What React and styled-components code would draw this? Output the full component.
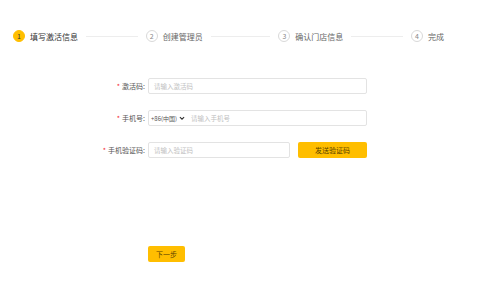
import React from 'react'
import styled, { createGlobalStyle } from 'styled-components'

const GlobalStyle = createGlobalStyle`
  html, body {
    margin: 0;
    padding: 0;
    background: #fff;
    font-family: "Noto Sans CJK SC", "Noto Sans", sans-serif;
  }
`

const Page = styled.div`
  width: 500px;
  height: 300px;
  box-sizing: border-box;
  padding: 30px 0 0 13px;
`

const StepsBar = styled.div`
  display: flex;
  align-items: center;
  width: 431px;
`

const Step = styled.div`
  display: flex;
  align-items: center;
  flex: ${props => (props.last ? 'none' : '1')};
`

const StepIcon = styled.span`
  width: 12px;
  height: 12px;
  box-sizing: border-box;
  border-radius: 50%;
  display: flex;
  align-items: center;
  justify-content: center;
  font-size: 7px;
  line-height: 1;
  background: ${props => (props.active ? '#ffbf00' : '#fff')};
  border: 1px solid ${props => (props.active ? '#ffbf00' : '#d9d9d9')};
  color: ${props => (props.active ? '#333' : '#888')};
`

const StepTitle = styled.span`
  margin-left: 5px;
  font-size: 8px;
  color: ${props => (props.active ? '#333' : '#666')};
  white-space: nowrap;
`

const StepLine = styled.span`
  flex: 1;
  height: 1px;
  background: #ededed;
  margin: 0 8px;
`

const Form = styled.div`
  margin-top: 36px;
  display: flex;
  flex-direction: column;
  gap: 16px;
`

const Row = styled.div`
  display: flex;
  align-items: center;
  height: 16px;
`

const Label = styled.label`
  width: 132px;
  text-align: right;
  padding-right: 3px;
  font-size: 7px;
  color: #555;
  white-space: nowrap;

  &::before {
    content: '*';
    color: #f5222d;
    margin-right: 2px;
  }
`

const Input = styled.div`
  width: ${props => props.width}px;
  height: 16px;
  box-sizing: border-box;
  border: 1px solid #e3e3e3;
  border-radius: 2px;
  display: flex;
  align-items: center;
  padding-left: 5px;
  font-size: 6.5px;
  color: #bfbfbf;
`

const CountryCode = styled.span`
  display: flex;
  align-items: center;
  color: #555;
  margin-right: 6px;
  margin-left: -3px;
  font-size: 6px;
`

const Button = styled.button`
  width: ${props => props.width}px;
  height: 16px;
  margin-left: ${props => props.offset || 0}px;
  border: none;
  border-radius: 2px;
  background: #ffbe00;
  color: #5a4300;
  font-family: inherit;
  font-size: 7px;
  padding: 0;
  cursor: pointer;
`

const Footer = styled.div`
  margin-top: 80px;
  padding-left: 135px;
`

const steps = ['填写激活信息', '创建管理员', '确认门店信息', '完成']

const Chevron = () => (
  <svg width="6" height="6" viewBox="0 0 10 10" style={{ marginLeft: 2 }}>
    <path d="M1.5 3.5 L5 7 L8.5 3.5" fill="none" stroke="#333" strokeWidth="1.8" />
  </svg>
)

export default function App() {
  return (
    <Page>
      <GlobalStyle />
      <StepsBar>
        {steps.map((title, i) => {
          const last = i === steps.length - 1
          return (
            <Step key={title} last={last}>
              <StepIcon active={i === 0}>{i + 1}</StepIcon>
              <StepTitle active={i === 0}>{title}</StepTitle>
              {!last && <StepLine />}
            </Step>
          )
        })}
      </StepsBar>
      <Form>
        <Row>
          <Label>激活码:</Label>
          <Input width={219}>请输入激活码</Input>
        </Row>
        <Row>
          <Label>手机号:</Label>
          <Input width={219}>
            <CountryCode>
              +86(中国)
              <Chevron />
            </CountryCode>
            请输入手机号
          </Input>
        </Row>
        <Row>
          <Label>手机验证码:</Label>
          <Input width={142}>请输入验证码</Input>
          <Button width={69} offset={8}>发送验证码</Button>
        </Row>
      </Form>
      <Footer>
        <Button width={37}>下一步</Button>
      </Footer>
    </Page>
  )
}
